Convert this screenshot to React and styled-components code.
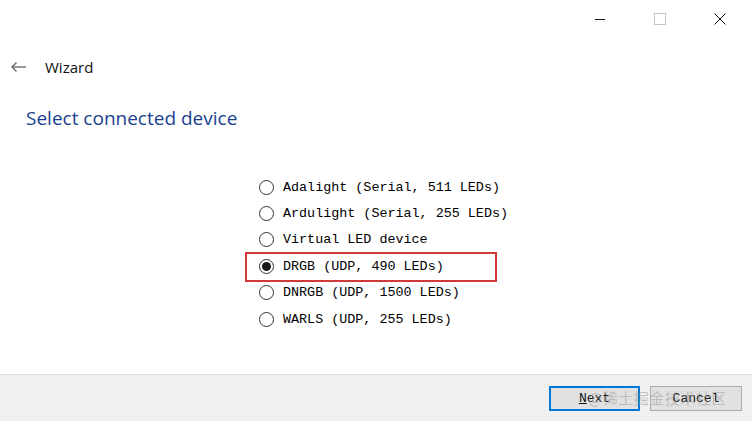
import React from "react";
import styled, { createGlobalStyle } from "styled-components";

const Global = createGlobalStyle`
  html, body { margin: 0; padding: 0; background: #fff; }
  body { width: 752px; height: 421px; overflow: hidden; font-family: "Open Sans", "Noto Sans", sans-serif; }
  #root { width: 752px; height: 421px; }
`;

const Window = styled.div`
  position: relative;
  width: 752px;
  height: 421px;
  display: flex;
  flex-direction: column;
  background: #fff;
`;

const TitleBar = styled.div`
  height: 38px;
  display: flex;
  justify-content: flex-end;
  align-items: center;
`;

const CtrlBtn = styled.div`
  width: 60px;
  height: 38px;
  display: flex;
  align-items: center;
  justify-content: center;
  margin-right: ${(p) => (p.$last ? "2px" : "0")};
`;

const Header = styled.div`
  height: 26px;
  margin-top: 16px;
  display: flex;
  align-items: center;
  padding-left: 10px;
  gap: 18px;
`;

const HeaderText = styled.span`
  font-family: "Open Sans", "Noto Sans", sans-serif;
  font-size: 15px;
  color: #111;
`;

const Title = styled.h1`
  margin: 25px 0 0 26px;
  font-family: "Open Sans", "Noto Sans", sans-serif;
  font-weight: 400;
  font-size: 19px;
  color: #1b3f91;
  line-height: 26px;
`;

const Body = styled.div`
  flex: 1;
  display: flex;
  flex-direction: column;
  padding: 43px 0 0 259px;
`;

const Option = styled.label`
  display: flex;
  align-items: center;
  height: 26.4px;
  gap: 9px;
  width: 240px;
  font-family: "Liberation Mono", "DejaVu Sans Mono", monospace;
  font-size: 13.4px;
  color: #000;
  position: relative;
  white-space: nowrap;
`;

const Radio = styled.span`
  width: 15px;
  height: 15px;
  border-radius: 50%;
  border: 1px solid #333;
  box-sizing: border-box;
  display: flex;
  align-items: center;
  justify-content: center;
  background: #fff;
  flex: none;
  &::after {
    content: "";
    display: ${(p) => (p.$checked ? "block" : "none")};
    width: 9px;
    height: 9px;
    border-radius: 50%;
    background: #1a1a1a;
  }
`;

const Highlight = styled.span`
  position: absolute;
  left: -14px;
  top: -1px;
  width: 252px;
  height: 30px;
  box-sizing: border-box;
  border: 2px solid #d23a3a;
  pointer-events: none;
`;

const Footer = styled.div`
  height: 46px;
  background: #f0f0f0;
  border-top: 1px solid #dcdcdc;
  display: flex;
  justify-content: flex-end;
  align-items: center;
  padding-right: 10px;
  gap: 10px;
`;

const Button = styled.button`
  width: ${(p) => (p.$primary ? "91px" : "92px")};
  height: 25px;
  box-sizing: border-box;
  background: #e1e1e1;
  border: ${(p) => (p.$primary ? "2px solid #0078d7" : "1px solid #adadad")};
  font-family: "Liberation Mono", "DejaVu Sans Mono", monospace;
  font-size: 13px;
  color: #111;
  padding: 0;
  margin-top: 1px;
  u { text-decoration: underline; }
`;

const Watermark = styled.div`
  position: absolute;
  left: 588px;
  top: 387px;
  font-family: "Noto Sans CJK SC", sans-serif;
  font-size: 15px;
  color: rgba(150, 150, 150, 0.5);
  pointer-events: none;
  letter-spacing: 0.5px;
`;

const options = [
  "Adalight (Serial, 511 LEDs)",
  "Ardulight (Serial, 255 LEDs)",
  "Virtual LED device",
  "DRGB (UDP, 490 LEDs)",
  "DNRGB (UDP, 1500 LEDs)",
  "WARLS (UDP, 255 LEDs)",
];

export default function App() {
  return (
    <Window>
      <Global />
      <TitleBar>
        <CtrlBtn>
          <svg width="12" height="12" viewBox="0 0 12 12">
            <path d="M1 6.5H11" stroke="#111" strokeWidth="1" />
          </svg>
        </CtrlBtn>
        <CtrlBtn>
          <svg width="12" height="12" viewBox="0 0 12 12">
            <rect x="0.5" y="0.5" width="11" height="11" fill="none" stroke="#c4c4c4" strokeWidth="1" />
          </svg>
        </CtrlBtn>
        <CtrlBtn $last>
          <svg width="12" height="12" viewBox="0 0 12 12">
            <path d="M0.5 0.5L11.5 11.5M11.5 0.5L0.5 11.5" stroke="#111" strokeWidth="1" />
          </svg>
        </CtrlBtn>
      </TitleBar>
      <Header>
        <svg width="17" height="12" viewBox="0 0 17 12">
          <path d="M16 6H2M6.5 1.5L2 6L6.5 10.5" stroke="#777" strokeWidth="1.6" fill="none" />
        </svg>
        <HeaderText>Wizard</HeaderText>
      </Header>
      <Title>Select connected device</Title>
      <Body>
        {options.map((o, i) => (
          <Option key={o}>
            <Radio $checked={i === 3} />
            {o}
            {i === 3 && <Highlight />}
          </Option>
        ))}
      </Body>
      <Footer>
        <Button $primary>
          <u>N</u>ext
        </Button>
        <Button>Cancel</Button>
      </Footer>
      <Watermark>@稀土掘金技术社区</Watermark>
    </Window>
  );
}
